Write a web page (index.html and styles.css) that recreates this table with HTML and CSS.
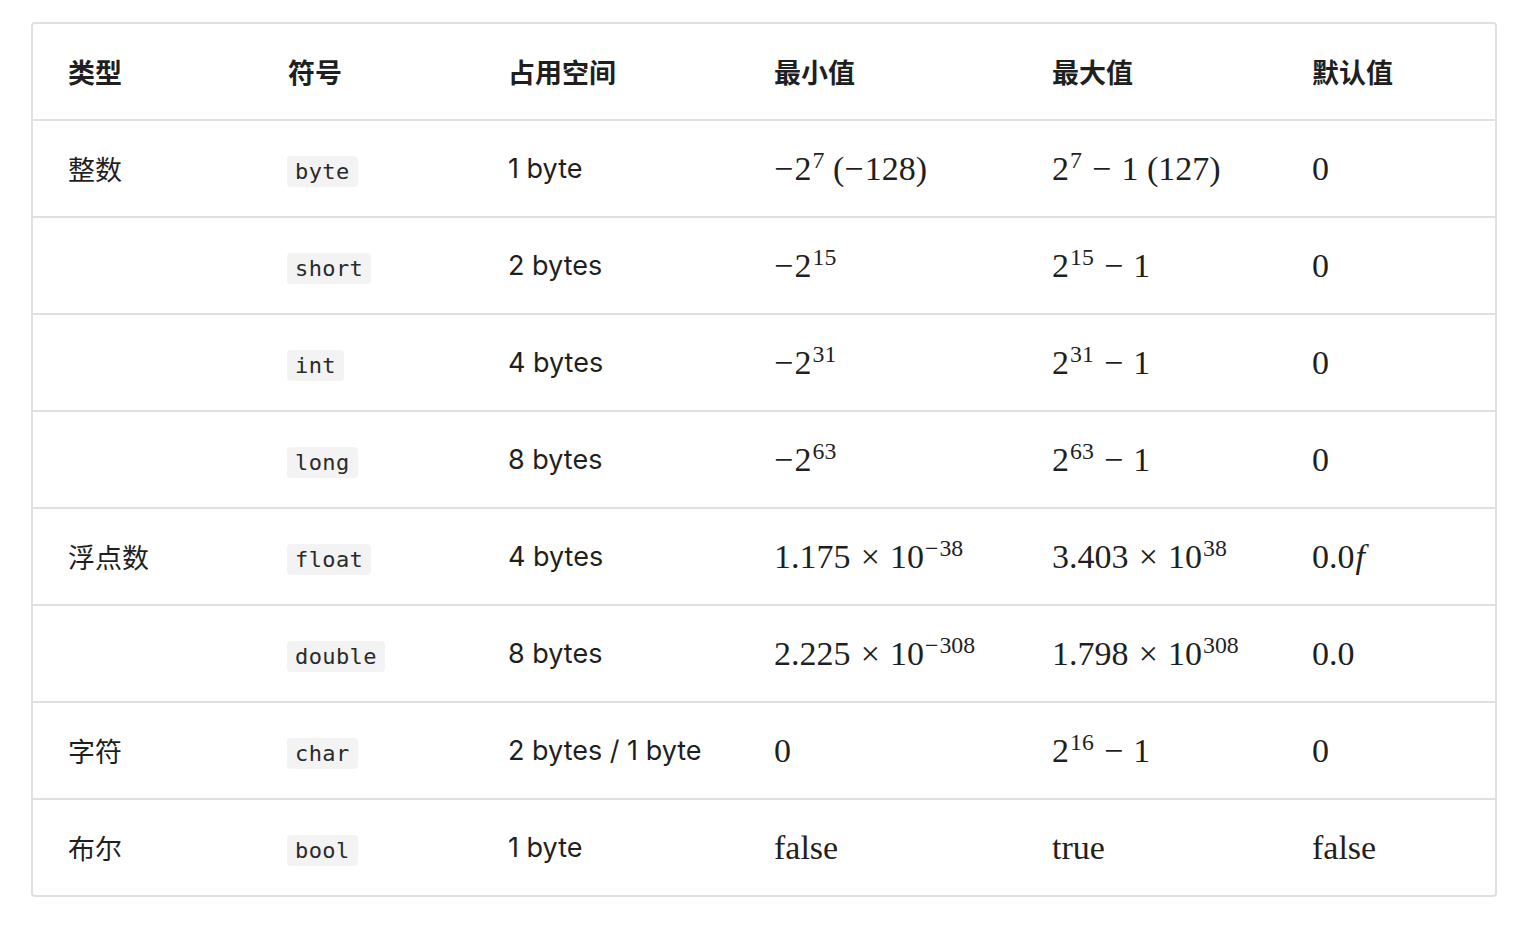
FILE: index.html
```html
<!DOCTYPE html>
<html lang="zh">
<head>
<meta charset="utf-8">
<title>Java 基本数据类型</title>
<link rel="stylesheet" href="styles.css">
</head>
<body>
<div class="wrap">
<table class="types">
  <colgroup>
    <col class="c1"><col class="c2"><col class="c3"><col class="c4"><col class="c5"><col class="c6">
  </colgroup>
  <thead>
    <tr><th>类型</th><th>符号</th><th>占用空间</th><th>最小值</th><th>最大值</th><th>默认值</th></tr>
  </thead>
  <tbody>
    <tr>
      <td>整数</td><td><code>byte</code></td><td>1 byte</td>
      <td class="m"><span class="neg">−</span>2<sup>7</sup> (<span class="neg">−</span>128)</td>
      <td class="m">2<sup>7</sup><span class="op">−</span>1 (127)</td>
      <td class="m">0</td>
    </tr>
    <tr>
      <td></td><td><code>short</code></td><td>2 bytes</td>
      <td class="m"><span class="neg">−</span>2<sup>15</sup></td>
      <td class="m">2<sup>15</sup><span class="op">−</span>1</td>
      <td class="m">0</td>
    </tr>
    <tr>
      <td></td><td><code>int</code></td><td>4 bytes</td>
      <td class="m"><span class="neg">−</span>2<sup>31</sup></td>
      <td class="m">2<sup>31</sup><span class="op">−</span>1</td>
      <td class="m">0</td>
    </tr>
    <tr>
      <td></td><td><code>long</code></td><td>8 bytes</td>
      <td class="m"><span class="neg">−</span>2<sup>63</sup></td>
      <td class="m">2<sup>63</sup><span class="op">−</span>1</td>
      <td class="m">0</td>
    </tr>
    <tr>
      <td>浮点数</td><td><code>float</code></td><td>4 bytes</td>
      <td class="m">1.175<span class="op">×</span>10<sup><span class="sneg">−</span>38</sup></td>
      <td class="m">3.403<span class="op">×</span>10<sup>38</sup></td>
      <td class="m">0.0<i>f</i></td>
    </tr>
    <tr>
      <td></td><td><code>double</code></td><td>8 bytes</td>
      <td class="m">2.225<span class="op">×</span>10<sup><span class="sneg">−</span>308</sup></td>
      <td class="m">1.798<span class="op">×</span>10<sup>308</sup></td>
      <td class="m">0.0</td>
    </tr>
    <tr>
      <td>字符</td><td><code>char</code></td><td>2 bytes / 1 byte</td>
      <td class="m">0</td>
      <td class="m">2<sup>16</sup><span class="op">−</span>1</td>
      <td class="m">0</td>
    </tr>
    <tr>
      <td>布尔</td><td><code>bool</code></td><td>1 byte</td>
      <td class="m">false</td>
      <td class="m">true</td>
      <td class="m">false</td>
    </tr>
  </tbody>
</table>
</div>
</body>
</html>
```
FILE: styles.css
```css
html, body {
  margin: 0;
  padding: 0;
  background: #ffffff;
}
body {
  font-family: Inter, "Noto Sans", "Noto Sans CJK SC", sans-serif;
  color: #1f1f1f;
  font-size: 27px;
}
.wrap {
  width: 1462px;
  margin: 22px 0 0 31px;
  border: 2px solid #e0e0e0;
  border-radius: 4px;
  overflow: hidden;
}
.types {
  width: 1462px;
  table-layout: fixed;
  border-collapse: collapse;
}
.c1 { width: 220px; }
.c2 { width: 220px; }
.c3 { width: 266px; }
.c4 { width: 278px; }
.c5 { width: 260px; }
.c6 { width: 218px; }
.types th, .types td {
  height: 95px;
  padding: 0 0 0 35px;
  text-align: left;
  vertical-align: middle;
  border-bottom: 2px solid #e0e0e0;
  white-space: nowrap;
}
.types tbody tr:last-child td {
  border-bottom: none;
}
.types th {
  font-family: "Noto Sans CJK SC", sans-serif;
  font-weight: 700;
  font-size: 27px;
}
.types td {
  font-family: Inter, "Noto Sans CJK SC", sans-serif;
  font-weight: 400;
}
.types td:first-child {
  font-family: "Noto Sans CJK SC", sans-serif;
}
.types code {
  font-family: "DejaVu Sans Mono", monospace;
  font-size: 22px;
  letter-spacing: 0.4px;
  line-height: 27px;
  display: inline-block;
  padding: 2px 8px;
  margin-left: -1px;
  background: #f3f3f3;
  border-radius: 4px;
  color: #2a2a2a;
  position: relative;
  top: 1px;
}
.types td.m {
  font-family: "Liberation Serif", "DejaVu Serif", serif;
  font-size: 34px;
}
.m sup {
  font-size: 0.7em;
  line-height: 0;
  vertical-align: 0.5em;
  margin-left: 1px;
}
.m .op {
  margin: 0 0.3em;
}
.m .neg {
  margin-right: 0.04em;
}
.m .sneg {
  margin-right: 0.04em;
}
.m i {
  font-style: italic;
  margin-left: 1px;
}
```
